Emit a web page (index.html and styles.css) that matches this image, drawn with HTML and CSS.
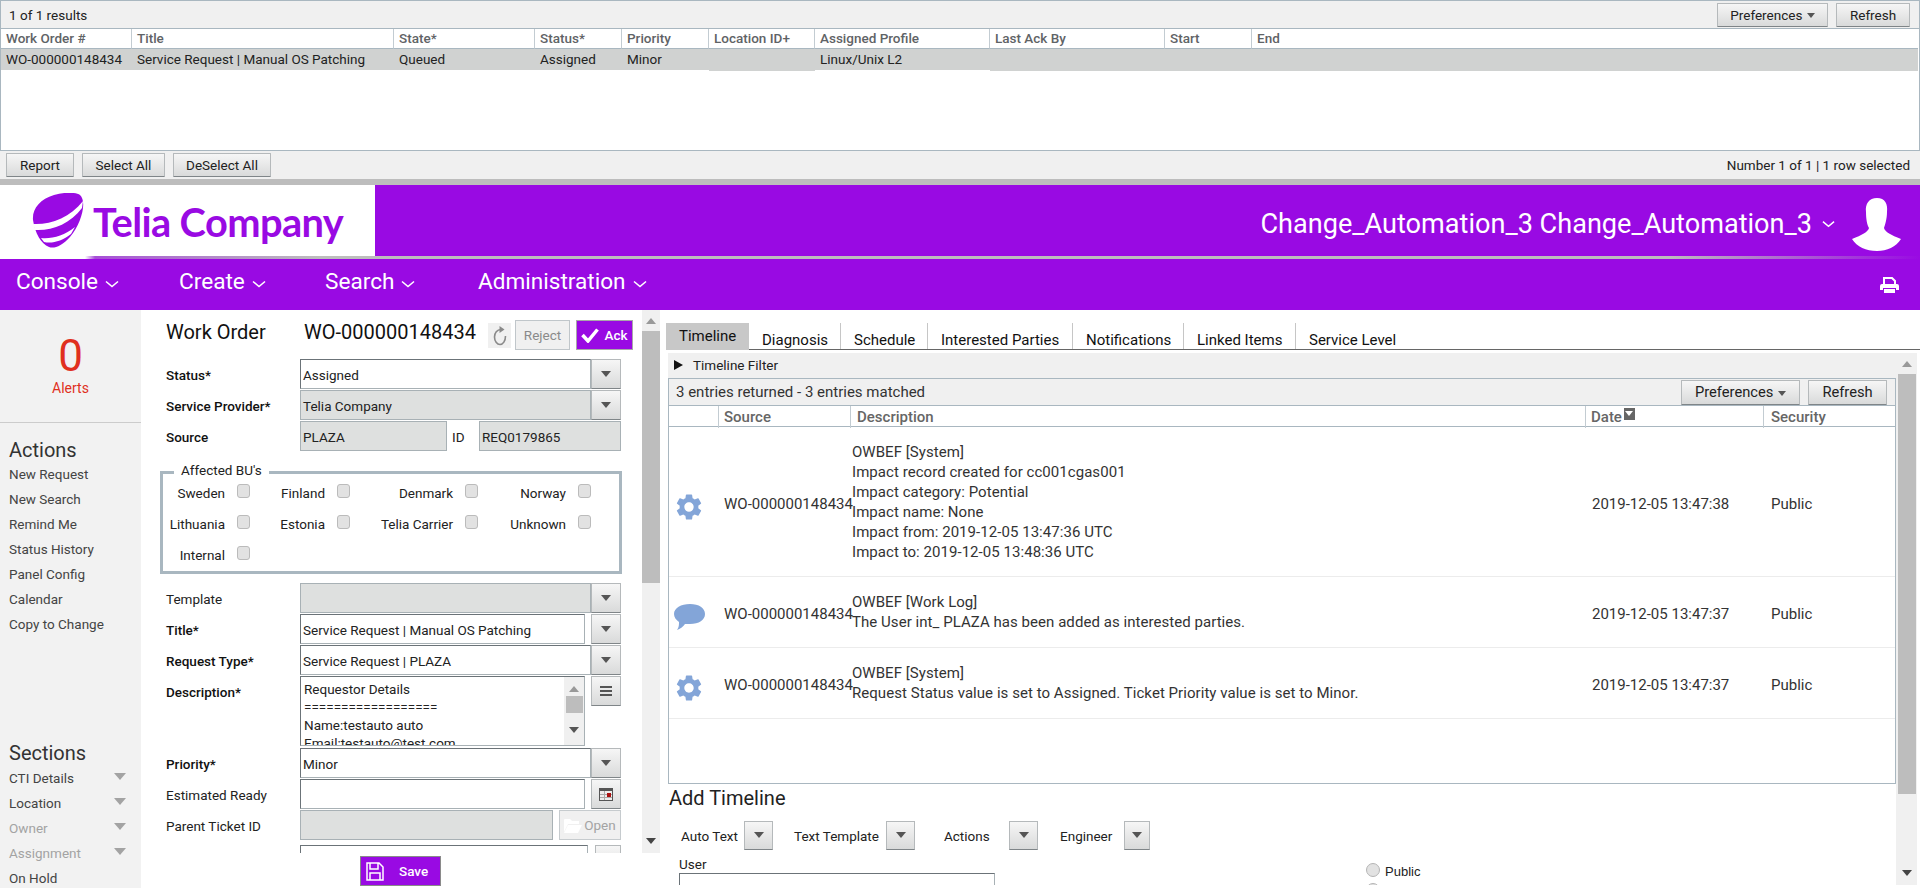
FILE: index.html
```html
<!DOCTYPE html>
<html>
<head>
    <title>Work Order</title>
    <link rel="stylesheet" href="styles.css">
</head>
<body>
    <svg class="defs" width="0" height="0">
        <symbol id="gear" viewBox="2 2 20 20"><path d="M19.14 12.94c.04-.3.06-.61.06-.94 0-.32-.02-.64-.07-.94l2.03-1.58a.49.49 0 0 0 .12-.61l-1.92-3.32a.488.488 0 0 0-.59-.22l-2.39.96c-.5-.38-1.03-.7-1.62-.94l-.36-2.54a.484.484 0 0 0-.48-.41h-3.84c-.24 0-.43.17-.47.41l-.36 2.54c-.59.24-1.13.57-1.62.94l-2.39-.96c-.22-.08-.47 0-.59.22L2.74 8.87c-.12.21-.08.47.12.61l2.03 1.58c-.05.3-.09.63-.09.94s.02.64.07.94l-2.03 1.58a.49.49 0 0 0-.12.61l1.92 3.32c.12.22.37.29.59.22l2.39-.96c.5.38 1.03.7 1.62.94l.36 2.54c.05.24.24.41.48.41h3.84c.24 0 .44-.17.47-.41l.36-2.54c.59-.24 1.13-.56 1.62-.94l2.39.96c.22.08.47 0 .59-.22l1.92-3.32c.12-.22.07-.47-.12-.61l-2.01-1.58zM12 15.6c-1.98 0-3.6-1.62-3.6-3.6s1.62-3.6 3.6-3.6 3.6 1.62 3.6 3.6-1.62 3.6-3.6 3.6z"/></symbol>
        <symbol id="chevron" viewBox="0 0 14 8"><polyline points="1,1.5 7,6.5 13,1.5" fill="none" stroke="#fff" stroke-width="1.6"/></symbol>
    </svg>

    <!-- results table on top -->
    <div class="results">
        <div class="results-bar">
            <span>1 of 1 results</span>
            <div class="btn-group">
                <button class="btn btn-prefs">Preferences <i class="tri tri-small"></i></button>
                <button class="btn btn-refresh">Refresh</button>
            </div>
        </div>
        <table class="results-table">
            <thead>
                <tr>
                    <th>Work Order #</th>
                    <th>Title</th>
                    <th>State*</th>
                    <th>Status*</th>
                    <th>Priority</th>
                    <th>Location ID+</th>
                    <th>Assigned Profile</th>
                    <th>Last Ack By</th>
                    <th>Start</th>
                    <th>End</th>
                </tr>
            </thead>
            <tbody>
                <tr>
                    <td>WO-000000148434</td>
                    <td>Service Request | Manual OS Patching</td>
                    <td>Queued</td>
                    <td>Assigned</td>
                    <td>Minor</td>
                    <td class="empty"></td>
                    <td>Linux/Unix L2</td>
                    <td class="empty"></td>
                    <td class="empty"></td>
                    <td class="empty"></td>
                </tr>
            </tbody>
        </table>
        <div class="results-foot">
            <div class="btn-group">
                <button class="btn btn-report">Report</button>
                <button class="btn btn-select">Select All</button>
                <button class="btn btn-deselect">DeSelect All</button>
            </div>
            <span>Number 1 of 1 | 1 row selected</span>
        </div>
    </div>

    <div class="brand">
        <div class="logo">
            <svg class="logo-mark" viewBox="0 0 52 55">
                <path fill="#990ae3" d="M48 2C55 8 50 30 38 44 30 53 22 56 17 54 9 51 3 40 1 27 0 16 8 6 22 2 32-1 44-1 48 2Z"/>
                <path fill="#fff" d="M1 31C18 32 38 25 51 8L50 15C38 31 20 38 3 37Z"/>
                <path fill="#fff" d="M9 45C20 46 32 43 43 34L39 41C30 48 20 51 12 49Z"/>
            </svg>
            <span class="logo-text">Telia Company</span>
        </div>
        <div class="user">
            <span class="user-name">Change_Automation_3 Change_Automation_3</span>
            <svg class="chevron-user"><use href="#chevron"/></svg>
            <svg class="avatar" viewBox="0 0 49 53">
                <path fill="#fff" d="M25 0C33 0 36 6 35 14 35 21 33 27 32 30 33 34 39 37 49 41 44 49 35 53 25 53 14 53 5 49 0 41 10 37 16 34 17 30 15 27 14 21 14 14 13 6 17 0 25 0Z"/>
            </svg>
        </div>
    </div>
    <div class="brand-line"></div>

    <div class="nav">
        <a class="nav-console">Console <svg><use href="#chevron"/></svg></a>
        <a class="nav-create">Create <svg><use href="#chevron"/></svg></a>
        <a class="nav-search">Search <svg><use href="#chevron"/></svg></a>
        <a class="nav-admin">Administration <svg><use href="#chevron"/></svg></a>
        <svg class="print" viewBox="0 0 19 16">
            <path fill="none" stroke="#fff" stroke-width="2" d="M4 8V1H12L15 4V8"/>
            <path fill="#fff" d="M2 7H17Q19 7 19 9V13H16V11H3V13H0V9Q0 7 2 7ZM4 12H15V16H4Z"/>
        </svg>
    </div>

    <div class="main">
        <div class="sidebar">
            <div class="alerts">
                <div class="alerts-num">0</div>
                <div class="alerts-label">Alerts</div>
            </div>
            <h3>Actions</h3>
            <ul class="side-list">
                <li>New Request</li>
                <li>New Search</li>
                <li>Remind Me</li>
                <li>Status History</li>
                <li>Panel Config</li>
                <li>Calendar</li>
                <li>Copy to Change</li>
            </ul>
            <h3 class="sections-title">Sections</h3>
            <ul class="side-list">
                <li>CTI Details <i class="tri tri-side"></i></li>
                <li>Location <i class="tri tri-side"></i></li>
                <li class="off">Owner <i class="tri tri-side"></i></li>
                <li class="off">Assignment <i class="tri tri-side"></i></li>
                <li>On Hold</li>
            </ul>
        </div>

        <div class="form-col">
            <div class="form-scroll">
                <div class="form-body">
                    <div class="form-head">
                        <span class="form-title">Work Order</span>
                        <span class="form-id">WO-000000148434</span>
                        <svg class="reload" viewBox="0 0 23 25">
                            <path fill="none" stroke="#8a8a8a" stroke-width="1.6" d="M13 6.5C9 6.5 6.5 10 6.5 14S9 21.5 12 21.5 17.5 18 17.5 13"/>
                            <path fill="#8a8a8a" d="M11.5 3L16.5 6.5 11.5 10Z"/>
                        </svg>
                        <button class="btn-reject">Reject</button>
                        <button class="btn-ack">
                            <svg viewBox="0 0 18 15"><path fill="none" stroke="#fff" stroke-width="3.5" d="M1.5 7L7 13 16.5 1.5"/></svg>
                            Ack
                        </button>
                    </div>

                    <div class="row">
                        <label class="strong">Status*</label>
                        <div class="field">Assigned</div>
                        <div class="drop"><i class="tri"></i></div>
                    </div>
                    <div class="row">
                        <label class="strong">Service Provider*</label>
                        <div class="field locked">Telia Company</div>
                        <div class="drop"><i class="tri"></i></div>
                    </div>
                    <div class="row">
                        <label class="strong">Source</label>
                        <div class="field locked source">PLAZA</div>
                        <span class="id-label">ID</span>
                        <div class="field locked">REQ0179865</div>
                    </div>

                    <fieldset class="bu">
                        <legend>Affected BU's</legend>
                        <div class="bu-grid">
                            <div class="bu-item">Sweden <i class="check"></i></div>
                            <div class="bu-item">Finland <i class="check"></i></div>
                            <div class="bu-item">Denmark <i class="check"></i></div>
                            <div class="bu-item">Norway <i class="check"></i></div>
                            <div class="bu-item">Lithuania <i class="check"></i></div>
                            <div class="bu-item">Estonia <i class="check"></i></div>
                            <div class="bu-item">Telia Carrier <i class="check"></i></div>
                            <div class="bu-item">Unknown <i class="check"></i></div>
                            <div class="bu-item">Internal <i class="check"></i></div>
                        </div>
                    </fieldset>

                    <div class="row">
                        <label>Template</label>
                        <div class="field locked"></div>
                        <div class="drop"><i class="tri"></i></div>
                    </div>
                    <div class="row">
                        <label class="strong">Title*</label>
                        <div class="field narrow">Service Request | Manual OS Patching</div>
                        <div class="drop"><i class="tri"></i></div>
                    </div>
                    <div class="row">
                        <label class="strong">Request Type*</label>
                        <div class="field">Service Request | PLAZA</div>
                        <div class="drop"><i class="tri"></i></div>
                    </div>
                    <div class="row row-desc">
                        <label class="strong">Description*</label>
                        <div class="textarea">
                            <div class="textarea-text">
                                Requestor Details<br>
                                ==================<br>
                                Name:testauto auto<br>
                                Email:testauto@test.com
                            </div>
                            <div class="textarea-bar">
                                <i class="tri tri-up"></i>
                                <b></b>
                                <i class="tri tri-down"></i>
                            </div>
                        </div>
                        <div class="drop drop-lines"><svg viewBox="0 0 12 10"><path fill="#555" d="M0 0H12V2H0ZM0 4H12V6H0ZM0 8H12V10H0Z"/></svg></div>
                    </div>
                    <div class="row">
                        <label class="strong">Priority*</label>
                        <div class="field">Minor</div>
                        <div class="drop"><i class="tri"></i></div>
                    </div>
                    <div class="row">
                        <label>Estimated Ready</label>
                        <div class="field narrow"></div>
                        <div class="drop">
                            <svg class="cal" viewBox="0 0 14 13"><path fill="#555" d="M0 0H14V13H0Z"/><path fill="#eee" d="M1 3H13V12H1Z"/><path fill="#aaa" d="M1 6H13V7H1ZM1 9H13V10H1ZM5 3H6V12H5Z"/><path fill="#a11" d="M8 5H12V9H8Z"/></svg>
                        </div>
                    </div>
                    <div class="row">
                        <label>Parent Ticket ID</label>
                        <div class="field locked parent"></div>
                        <button class="btn-open">
                            <svg viewBox="0 0 18 15"><path fill="#fff" d="M0 2Q0 1 1 1H6L8 3H15V6H4L0 14ZM4 7H18L14 15H0Z"/></svg>
                            Open
                        </button>
                    </div>
                    <div class="row row-cut">
                        <label></label>
                        <div class="field cut"></div>
                        <div class="drop drop-cut"></div>
                    </div>
                </div>
                <div class="vbar form-bar">
                    <i class="tri tri-up"></i>
                    <b></b>
                    <i class="tri tri-down"></i>
                </div>
            </div>
            <div class="save-bar">
                <button class="btn-save">
                    <svg viewBox="0 0 18 19"><path fill="none" stroke="#fff" stroke-width="1.5" d="M1 1H13L17 5V18H1ZM4 1V7H12V1M4 18V11H14V18"/></svg>
                    Save
                </button>
            </div>
        </div>

        <div class="right">
            <div class="tabs">
                <span class="tab active">Timeline</span>
                <span class="tab">Diagnosis</span>
                <span class="tab">Schedule</span>
                <span class="tab">Interested Parties</span>
                <span class="tab">Notifications</span>
                <span class="tab">Linked Items</span>
                <span class="tab last">Service Level</span>
            </div>
            <div class="right-scroll">
                <div class="right-body">
                    <div class="filter"><i class="tri-right"></i>Timeline Filter</div>
                    <div class="grid">
                        <div class="grid-bar">
                            <span>3 entries returned - 3 entries matched</span>
                            <div class="btn-group">
                                <button class="btn btn-prefs2">Preferences <i class="tri tri-small"></i></button>
                                <button class="btn btn-refresh2">Refresh</button>
                            </div>
                        </div>
                        <div class="grid-row grid-head">
                            <div></div>
                            <div>Source</div>
                            <div>Description</div>
                            <div>Date<i class="sort"><i class="tri tri-sort"></i></i></div>
                            <div>Security</div>
                        </div>
                        <div class="grid-row entry entry-big">
                            <div class="ico"><svg class="gear"><use href="#gear"/></svg></div>
                            <div>WO-000000148434</div>
                            <div class="desc">
                                OWBEF [System]<br>
                                Impact record created for cc001cgas001<br>
                                Impact category: Potential<br>
                                Impact name: None<br>
                                Impact from: 2019-12-05 13:47:36 UTC<br>
                                Impact to: 2019-12-05 13:48:36 UTC
                            </div>
                            <div>2019-12-05 13:47:38</div>
                            <div>Public</div>
                        </div>
                        <div class="grid-row entry">
                            <div class="ico">
                                <svg class="bubble" viewBox="0 0 31 26"><path fill="#83a5d8" d="M16 0C25 0 31 4 31 10 31 16 25 20 16 20 14 20 12 20 11 20 9 23 6 25 3 26 5 23 5 21 5 18 2 16 0 13 0 10 0 4 7 0 16 0Z"/></svg>
                            </div>
                            <div>WO-000000148434</div>
                            <div class="desc">
                                OWBEF [Work Log]<br>
                                The User int_ PLAZA has been added as interested parties.
                            </div>
                            <div>2019-12-05 13:47:37</div>
                            <div>Public</div>
                        </div>
                        <div class="grid-row entry">
                            <div class="ico"><svg class="gear"><use href="#gear"/></svg></div>
                            <div>WO-000000148434</div>
                            <div class="desc">
                                OWBEF [System]<br>
                                Request Status value is set to Assigned. Ticket Priority value is set to Minor.
                            </div>
                            <div>2019-12-05 13:47:37</div>
                            <div>Public</div>
                        </div>
                    </div>
                    <h2 class="add-title">Add Timeline</h2>
                    <div class="add-tools">
                        <span class="tool-auto">Auto Text</span>
                        <div class="drop tool-drop"><i class="tri"></i></div>
                        <span class="tool-template">Text Template</span>
                        <div class="drop tool-drop"><i class="tri"></i></div>
                        <span class="tool-actions">Actions</span>
                        <div class="drop tool-drop"><i class="tri"></i></div>
                        <span class="tool-engineer">Engineer</span>
                        <div class="drop tool-drop tool-drop-last"><i class="tri"></i></div>
                    </div>
                    <div class="add-user">
                        <div class="user-col">
                            <div class="user-label">User</div>
                            <div class="user-input"></div>
                        </div>
                        <div class="radios">
                            <div class="radio-row"><i class="radio"></i>Public</div>
                            <div class="radio-row"><i class="radio"></i></div>
                        </div>
                    </div>
                </div>
                <div class="vbar right-bar">
                    <i class="tri tri-up"></i>
                    <b></b>
                    <i class="tri tri-down"></i>
                </div>
            </div>
        </div>
    </div>
</body>
</html>
```

FILE: styles.css
```css
html, body {
    margin: 0;
    padding: 0;
    height: 888px;
    overflow: hidden;
    background: #fff;
}

body {
    font-family: Roboto, "Liberation Sans", sans-serif;
    font-size: 13.5px;
    color: #222;
}

.defs {
    display: block;
    height: 0;
}

button {
    font-family: inherit;
    padding: 0;
    cursor: pointer;
}

/* Triangles */
.tri {
    display: inline-block;
    width: 0;
    height: 0;
    border-left: 5px solid transparent;
    border-right: 5px solid transparent;
    border-top: 6px solid #555;
}

.tri-small {
    border-left-width: 4px;
    border-right-width: 4px;
    border-top-width: 5px;
    vertical-align: middle;
    margin-left: 1px;
}

.tri-up {
    border-top: 0;
    border-bottom: 6px solid #999;
}

.tri-down {
    border-top: 6px solid #555;
}

/* Buttons */
.btn {
    height: 24px;
    font-size: 13.5px;
    color: #222;
    background: linear-gradient(#f6f6f6, #d9dada);
    border: 1px solid #b5b9bb;
    border-bottom-color: #7f8588;
    border-radius: 1px;
}

.btn-group {
    display: flex;
    gap: 8px;
}

.btn-prefs { width: 111px; }
.btn-refresh { width: 74px; }
.btn-report { width: 68px; }
.btn-select { width: 83px; }
.btn-deselect { width: 98px; }
.btn-prefs2 { width: 119px; height: 25px; font-size: 14.7px; }
.btn-refresh2 { width: 79px; height: 25px; font-size: 14.7px; }

/* Results */
.results {
    height: 179px;
    box-sizing: border-box;
    border-top: 1px solid #a9b7c0;
    background: #fff;
    display: flex;
    flex-direction: column;
}

.results-bar {
    height: 27px;
    background: #f0f0f0;
    border-bottom: 1px solid #a9b7c0;
    display: flex;
    justify-content: space-between;
    align-items: center;
    padding: 0 9px 0 8px;
    border-left: 1px solid #a9b7c0;
    border-right: 1px solid #a9b7c0;
    box-sizing: content-box;
}

.results-table {
    width: 100%;
    height: 122px;
    table-layout: fixed;
    border-collapse: separate;
    border-spacing: 0;
    border-left: 1px solid #a9b7c0;
    border-right: 1px solid #a9b7c0;
    box-sizing: border-box;
    display: block;
    border-bottom: 1px solid #a9b7c0;
}

.results-table th {
    height: 18px;
    box-sizing: content-box;
    padding: 0 0 1px 5px;
    font-weight: 500;
    color: #5f6366;
    text-align: left;
    border-bottom: 1px solid #a9b7c0;
    border-right: 1px solid #c3ccd2;
    white-space: nowrap;
}

.results-table th:last-child {
    border-right: 0;
}

.results-table td {
    height: 21px;
    padding: 0 0 1px 5px;
    box-sizing: border-box;
    background: #d0d2d1;
    white-space: nowrap;
    color: #222;
}

.results-table td.empty {
    box-shadow: 0 1px 0 #d0d2d1;
}

.results-table th:nth-child(1) { width: 125px; }
.results-table th:nth-child(2) { width: 256px; }
.results-table th:nth-child(3) { width: 135px; }
.results-table th:nth-child(4) { width: 81px; }
.results-table th:nth-child(5) { width: 81px; }
.results-table th:nth-child(6) { width: 100px; }
.results-table th:nth-child(7) { width: 169px; }
.results-table th:nth-child(8) { width: 169px; }
.results-table th:nth-child(9) { width: 81px; }
.results-table th:nth-child(10) { width: 661px; }

.results-foot {
    flex: 1;
    background: #f0f0f0;
    display: flex;
    justify-content: space-between;
    align-items: center;
    padding: 0 10px 0 6px;
}

/* Brand */
.brand {
    height: 71px;
    margin-top: 6px;
    background: #990ae3;
    display: flex;
    justify-content: space-between;
    align-items: center;
    box-shadow: 0 -6px 0 #bdbdbd;
}

.logo {
    width: 375px;
    height: 71px;
    background: #fff;
    display: flex;
    align-items: center;
    padding-left: 32px;
    box-sizing: border-box;
}

.logo-mark {
    width: 52px;
    height: 55px;
    flex: none;
}

.logo-text {
    margin: 2px 0 0 9px;
    font-family: Lato, Roboto, sans-serif;
    font-weight: 700;
    font-size: 39.8px;
    letter-spacing: -0.6px;
    color: #990ae3;
    white-space: nowrap;
}

.user {
    display: flex;
    align-items: center;
    padding-right: 19px;
    color: #fff;
    font-size: 27.1px;
    white-space: nowrap;
}

.user-name {
    margin-top: 6px;
}

.chevron-user {
    width: 13px;
    height: 8px;
    margin: 6px 17px 0 10px;
}

.avatar {
    width: 49px;
    height: 53px;
    margin-top: 7px;
}

.brand-line {
    height: 3px;
    background: linear-gradient(to right, #fff 85px, #a64fd6 95px, #bdbdbd 320px, #bdbdbd 1670px, #990ae3 1920px);
}

/* Nav */
.nav {
    height: 51px;
    box-sizing: border-box;
    padding: 0 0 6px 16px;
    background: #990ae3;
    display: flex;
    align-items: center;
    color: #fff;
    font-size: 22.6px;
}

.nav a {
    display: flex;
    align-items: center;
    gap: 7px;
    white-space: nowrap;
}

.nav a svg {
    width: 14px;
    height: 8px;
    margin-top: 4px;
}

.nav-console { width: 163px; }
.nav-create { width: 146px; }
.nav-search { width: 153px; }
.nav-admin { flex: 1; }

.print {
    width: 19px;
    height: 16px;
    margin: 6px 21px 0 0;
}

/* Main */
.main {
    height: 578px;
    display: flex;
    overflow: hidden;
}

.sidebar {
    width: 141px;
    flex: none;
    background: #f2f2f2;
    box-sizing: border-box;
}

.alerts {
    height: 90px;
    margin-bottom: 15px;
    border-bottom: 1px solid #ccc;
    text-align: center;
    color: #e0301e;
    padding-top: 22px;
}

.alerts-num {
    font-size: 44px;
    line-height: 48px;
}

.alerts-label {
    font-size: 14px;
    line-height: 16px;
}

.sidebar h3 {
    margin: 0 0 0 9px;
    font-size: 20px;
    font-weight: 400;
    line-height: 24px;
    color: #333;
}

.sidebar .sections-title {
    margin: 104px 0 1px 9px;
}

.side-list {
    list-style: none;
    margin: 0;
    padding: 0 0 0 9px;
}

.side-list li {
    height: 25px;
    line-height: 25px;
    color: #444;
    position: relative;
}

.side-list li.off {
    color: #a3a3a3;
}

.tri-side {
    position: absolute;
    left: 105px;
    top: 7px;
    border-left-width: 6px;
    border-right-width: 6px;
    border-top: 7px solid #a3a3a3;
}

/* Work order form */
.form-col {
    width: 519px;
    flex: none;
    display: flex;
    flex-direction: column;
}

.form-scroll {
    height: 543px;
    display: flex;
    overflow: hidden;
}

.form-body {
    width: 499px;
    flex: none;
    box-sizing: border-box;
    padding: 10px 0 0 19px;
}

.form-head {
    display: flex;
    align-items: center;
    height: 30px;
    margin-bottom: 9px;
    padding-left: 6px;
}

.form-title {
    width: 138px;
    margin-top: -6px;
    font-size: 20px;
    color: #111;
}

.form-id {
    width: 171px;
    margin-top: -6px;
    font-size: 20px;
    color: #111;
    white-space: nowrap;
}

.reload {
    width: 23px;
    height: 25px;
    margin-left: 13px;
    background: #f0f0f0;
}

.btn-reject {
    width: 55px;
    height: 30px;
    margin-left: 4px;
    font-size: 13.5px;
    color: #8a8a8a;
    background: #f0f0f0;
    border: 1px solid #c0c6ca;
}

.btn-ack {
    width: 57px;
    height: 30px;
    margin-left: 6px;
    display: flex;
    align-items: center;
    justify-content: center;
    gap: 5px;
    background: #990ae3;
    border: 1px solid #a9a9a9;
    color: #fff;
    font-size: 13.5px;
    font-weight: 500;
}

.btn-ack svg {
    width: 18px;
    height: 15px;
}

.row {
    display: flex;
    align-items: stretch;
    width: 461px;
    box-sizing: border-box;
    height: 30px;
    margin-bottom: 1px;
    padding-left: 6px;
}

.row label {
    width: 134px;
    flex: none;
    line-height: 33px;
    color: #222;
}

.row label.strong {
    font-weight: 500;
    color: #111;
}

.field {
    flex: 1;
    box-sizing: border-box;
    border: 1px solid #a8b1b5;
    border-top-color: #6b7378;
    border-left-color: #6b7378;
    background: #fff;
    padding: 0 2px;
    line-height: 30px;
    color: #222;
    white-space: nowrap;
    overflow: hidden;
}

.field.locked {
    background: #dee0df;
    border-color: #a8b1b5;
}

.field.narrow {
    flex: none;
    width: 285px;
    margin-right: 6px;
}

.field.source {
    flex: none;
    width: 147px;
}

.id-label {
    width: 32px;
    padding-left: 5px;
    box-sizing: border-box;
    line-height: 33px;
}

.field.parent {
    flex: none;
    width: 253px;
}

.drop {
    width: 30px;
    flex: none;
    box-sizing: border-box;
    background: linear-gradient(#f6f6f6, #d9dada);
    border: 1px solid #b5b9bb;
    border-bottom-color: #7f8588;
    display: flex;
    align-items: flex-start;
    justify-content: center;
    padding-top: 11px;
}

.drop .cal {
    width: 14px;
    height: 13px;
    margin-top: -3px;
}

.drop-lines {
    height: 30px;
}

.drop-lines svg {
    width: 12px;
    height: 10px;
    margin-top: -2px;
}

.bu {
    width: 462px;
    box-sizing: border-box;
    margin: 13px 0 9px;
    padding: 0;
    border: 3px solid #a9b7c0;
    height: 110px;
}

.bu legend {
    margin-left: 11px;
    padding: 0 7px;
    line-height: 16px;
    position: relative;
    top: -2px;
}

.bu-grid {
    display: grid;
    grid-template-columns: 87px 100px 128px 113px;
    grid-auto-rows: 31px;
    margin-top: -3px;
}

.bu-item {
    display: flex;
    justify-content: flex-end;
    align-items: center;
    gap: 12px;
    white-space: nowrap;
    color: #222;
}

.check {
    width: 13px;
    height: 14px;
    box-sizing: border-box;
    background: #e2e2e2;
    border: 1px solid #bbb;
    border-radius: 3px;
    margin-top: -4px;
}

.row-desc {
    height: 70px;
    margin: 1px 0 2px;
}

.textarea {
    width: 285px;
    height: 70px;
    margin-right: 6px;
    flex: none;
    box-sizing: border-box;
    border: 1px solid #a8b1b5;
    border-top-color: #6b7378;
    border-left-color: #6b7378;
    display: flex;
    overflow: hidden;
}

.textarea-text {
    flex: 1;
    padding: 3px 0 0 3px;
    line-height: 18px;
    white-space: nowrap;
    overflow: hidden;
}

.textarea-bar {
    width: 20px;
    flex: none;
    background: #f0f0f0;
    display: flex;
    flex-direction: column;
    align-items: center;
    padding-top: 9px;
    box-sizing: border-box;
}

.textarea-bar b {
    width: 17px;
    height: 17px;
    background: #bdbdbd;
    margin-top: 4px;
}

.textarea-bar .tri-down {
    margin-top: 14px;
}

.btn-open {
    width: 62px;
    margin-left: 6px;
    box-sizing: border-box;
    display: flex;
    align-items: center;
    justify-content: center;
    gap: 2px;
    background: #f0f0f0;
    border: 1px solid #c6cbce;
    color: #a3a3a3;
    font-size: 13.5px;
}

.btn-open svg {
    width: 18px;
    height: 15px;
}

.row-cut {
    margin-top: 5px;
}

.field.cut {
    flex: none;
    width: 288px;
    margin-right: 7px;
}

.drop-cut {
    width: 26px;
    flex: none;
}

.vbar {
    background: #f0f0f0;
    display: flex;
    flex-direction: column;
    align-items: center;
    position: relative;
}

.form-bar {
    width: 18px;
    margin-left: 2px;
    height: 543px;
    padding-top: 3px;
    box-sizing: border-box;
}

.form-bar .tri-up {
    margin-top: 5px;
}

.form-bar b {
    width: 18px;
    height: 252px;
    background: #bdbdbd;
    margin-top: 7px;
}

.form-bar .tri-down {
    margin-top: 255px;
    border-top-color: #444;
}

.save-bar {
    display: flex;
    justify-content: center;
    padding-top: 3px;
}

.btn-save {
    width: 81px;
    height: 30px;
    display: flex;
    align-items: center;
    gap: 15px;
    padding-left: 5px;
    box-sizing: border-box;
    background: #990ae3;
    border: 1px solid #8a8a8a;
    color: #fff;
    font-size: 13.5px;
    font-weight: 500;
}

.btn-save svg {
    width: 18px;
    height: 19px;
    flex: none;
}

/* Right side */
.right {
    flex: 1;
    min-width: 0;
    padding-left: 6px;
    box-sizing: border-box;
}

.tabs {
    display: flex;
    align-items: flex-end;
    height: 26px;
    margin-top: 13px;
    border-bottom: 1px solid #666;
    white-space: nowrap;
    font-size: 15px;
}

.tab {
    height: 26px;
    line-height: 34px;
    padding: 0 13px;
    box-sizing: border-box;
    border-right: 1px solid #c6c6c6;
    color: #111;
}

.tab:nth-child(2) { width: 92px; }
.tab:nth-child(3) { width: 87px; }
.tab:nth-child(4) { width: 145px; }
.tab:nth-child(5) { width: 111px; }
.tab:nth-child(6) { width: 112px; }

.tab.active {
    width: 83px;
    height: 27px;
    line-height: 27px;
    background: #c8c8c8;
    border-right: 0;
    margin-bottom: -1px;
}

.tab.last {
    border-right: 0;
}

.right-scroll {
    display: flex;
    height: 532px;
    margin-top: 3px;
    overflow: hidden;
}

.right-body {
    width: 1228px;
    margin-left: 2px;
    flex: none;
}

.filter {
    height: 25px;
    box-sizing: border-box;
    padding: 0 0 2px 6px;
    background: #f0f0f0;
    display: flex;
    align-items: center;
    color: #222;
}

.tri-right {
    width: 0;
    height: 0;
    border-top: 5px solid transparent;
    border-bottom: 5px solid transparent;
    border-left: 9px solid #111;
    margin-right: 10px;
}

.grid {
    height: 406px;
    box-sizing: border-box;
    border: 1px solid #a9b7c0;
    font-size: 15px;
}

.grid-bar {
    height: 26px;
    background: #f0f0f0;
    border-bottom: 1px solid #a9b7c0;
    display: flex;
    justify-content: space-between;
    align-items: center;
    padding: 0 8px 0 7px;
    color: #333;
}

.grid-row {
    display: grid;
    grid-template-columns: 50px 132px 735px 178px 1fr;
    align-items: center;
}

.grid-head {
    height: 20px;
    border-bottom: 1px solid #a9b7c0;
    font-weight: 500;
    color: #666;
    align-items: stretch;
    line-height: 22px;
}

.grid-head > div {
    padding-left: 5px;
    border-right: 1px solid #c3ccd2;
    white-space: nowrap;
}

.grid-head > div:last-child {
    border-right: 0;
    padding-left: 7px;
}

.grid-head > div:nth-child(3) {
    padding-left: 6px;
}

.sort {
    display: inline-flex;
    justify-content: center;
    width: 11px;
    height: 12px;
    background: #666;
    margin-left: 2px;
    vertical-align: 6px;
}

.tri-sort {
    margin-top: 3px;
    border-left-width: 4px;
    border-right-width: 4px;
    border-top: 5px solid #fff;
}

.entry {
    height: 71px;
    box-sizing: border-box;
    border-bottom: 1px solid #ececec;
    color: #333;
}

.entry-big {
    height: 150px;
}

.entry > div {
    padding-left: 5px;
    margin-top: 4px;
    white-space: nowrap;
}

.entry > div:nth-child(4) {
    padding-left: 6px;
}

.entry > div:nth-child(5) {
    padding-left: 7px;
}

.entry > .desc {
    padding-left: 1px;
    line-height: 20px;
    margin-top: 0;
    letter-spacing: 0.05px;
}

.entry > .ico {
    padding-left: 7px;
    display: flex;
    margin-top: 10px;
}

.gear {
    width: 26px;
    height: 26px;
    fill: #83a5d8;
}

.bubble {
    width: 31px;
    height: 26px;
    margin-left: -2px;
}

.add-title {
    margin: 2px 0 0 1px;
    height: 24px;
    font-size: 20px;
    font-weight: 400;
    line-height: 24px;
    color: #222;
}

.add-tools {
    display: flex;
    align-items: center;
    height: 29px;
    margin-top: 11px;
    padding-left: 13px;
}

.tool-auto { width: 63px; }
.tool-template { width: 92px; margin-left: 21px; }
.tool-actions { width: 65px; margin-left: 29px; }
.tool-engineer { width: 64px; margin-left: 22px; }

.tool-drop {
    height: 29px;
    width: 29px;
    padding-top: 10px;
}

.tool-drop-last {
    width: 26px;
}

.add-user {
    display: flex;
}

.user-col {
    width: 698px;
    flex: none;
    padding-left: 11px;
    box-sizing: border-box;
}

.user-label {
    height: 17px;
    line-height: 17px;
    margin-top: 6px;
}

.user-input {
    width: 316px;
    height: 30px;
    box-sizing: border-box;
    border: 1px solid #a8b1b5;
    border-top-color: #6b7378;
    border-left-color: #6b7378;
}

.radios {
    padding-top: 11px;
}

.radio-row {
    display: flex;
    align-items: center;
    height: 20px;
    gap: 5px;
    font-family: "Liberation Sans", sans-serif;
    font-size: 13px;
    color: #222;
}

.radio {
    width: 14px;
    height: 14px;
    box-sizing: border-box;
    border-radius: 50%;
    background: #e2e2e2;
    border: 1px solid #b5b5b5;
    margin-top: -2px;
}

.right-bar {
    width: 21px;
    height: 532px;
    box-sizing: border-box;
    padding-top: 8px;
}

.right-bar .tri-up {
    margin-bottom: 7px;
}

.right-bar b {
    width: 18px;
    height: 420px;
    background: #bdbdbd;
}

.right-bar .tri-down {
    margin-top: 76px;
    border-top-color: #444;
}
```
